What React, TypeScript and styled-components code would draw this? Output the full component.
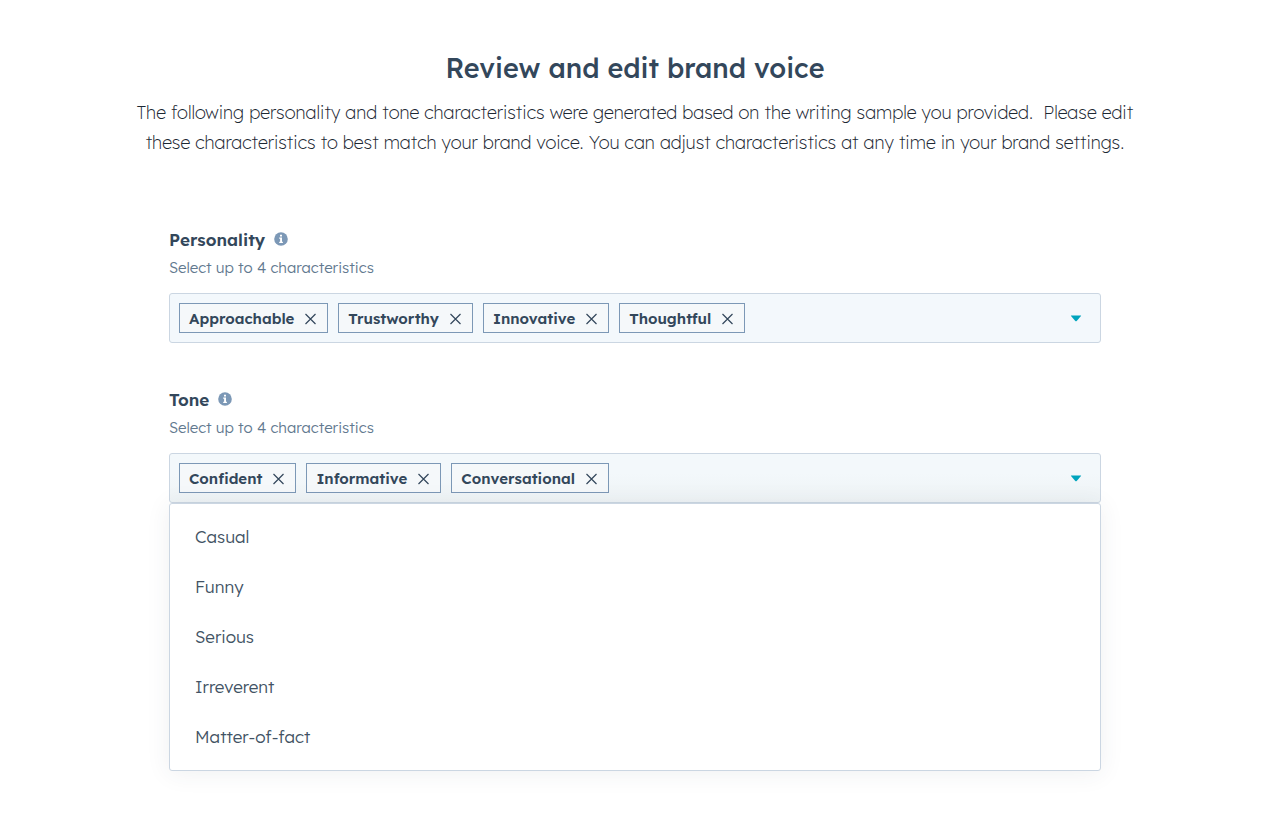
import React, { useState } from "react";
import styled, { createGlobalStyle } from "styled-components";

const GlobalStyle = createGlobalStyle`
  *, *::before, *::after { box-sizing: border-box; }
  body {
    margin: 0;
    background: #fff;
    color: #33475b;
    font-family: "Lexend Deca", Inter, "Liberation Sans", sans-serif;
  }
`;

const Page = styled.main`
  display: flex;
  flex-direction: column;
  align-items: center;
  padding: 48px 34px 42px 24px;
`;

const Header = styled.header`
  max-width: 1020px;
  text-align: center;
`;

const Title = styled.h1`
  margin: 0;
  font-size: 27px;
  line-height: 40px;
  font-weight: 500;
  color: #33475b;
`;

const Intro = styled.p`
  margin: 10px 0 0;
  font-size: 18px;
  line-height: 30px;
  font-weight: 200;
  color: #1c2833;
`;

const Line = styled.span`
  display: block;
  white-space: pre-wrap;
`;

const Form = styled.form`
  display: flex;
  flex-direction: column;
  gap: 43px;
  width: 100%;
  max-width: 932px;
  margin-top: 68px;
`;

const Field = styled.section`
  display: flex;
  flex-direction: column;
`;

const LabelRow = styled.div`
  display: flex;
  align-items: center;
  gap: 9px;
`;

const Label = styled.label`
  font-size: 17px;
  line-height: 28px;
  font-weight: 600;
  color: #33475b;
`;

const InfoButton = styled.button`
  display: flex;
  margin: 0 0 3px;
  padding: 0;
  border: 0;
  background: none;
  cursor: pointer;
`;

const Hint = styled.p`
  margin: 0 0 11px;
  font-size: 15px;
  line-height: 28px;
  font-weight: 300;
  color: #62798f;
`;

const Combo = styled.div<{ $open?: boolean }>`
  display: flex;
  align-items: center;
  justify-content: space-between;
  min-height: 50px;
  padding: 9px;
  border: 1px solid #cbd6e2;
  border-radius: 3px;
  background: ${(p) =>
    p.$open ? "linear-gradient(#f3f8fb 40%, #eef3f5)" : "#f3f8fc"};
`;

const Chips = styled.ul`
  display: flex;
  flex-wrap: wrap;
  gap: 10px;
  margin: 0;
  padding: 0;
  list-style: none;
`;

const Chip = styled.li`
  display: flex;
  align-items: center;
  gap: 10px;
  height: 30px;
  padding: 2px 10px 0 9px;
  border: 1px solid #7c98b6;
  background: #f5f8fa;
  font-size: 15px;
  line-height: 26px;
  font-weight: 600;
  color: #33475b;
`;

const RemoveButton = styled.button`
  display: flex;
  padding: 0;
  border: 0;
  background: none;
  cursor: pointer;
`;

const Toggle = styled.button`
  display: flex;
  padding: 8px 9px;
  border: 0;
  background: none;
  cursor: pointer;
`;

const Menu = styled.div`
  display: flex;
  flex-direction: column;
  padding: 8px 0;
  border: 1px solid #cbd6e2;
  border-radius: 3px;
  background: #fff;
  box-shadow: 0 2px 24px rgba(45, 62, 80, 0.08);
`;

const Option = styled.button`
  height: 50px;
  padding: 0 25px;
  border: 0;
  background: none;
  font-family: inherit;
  font-size: 17px;
  line-height: 28px;
  font-weight: 300;
  text-align: left;
  color: #425364;
  cursor: pointer;
`;

const InfoIcon = () => (
  <svg width="14" height="14" viewBox="0 0 14 14" aria-hidden="true">
    <circle cx="7" cy="7" r="6.8" fill="#7c98b6" />
    <path d="M6 2.8h2v1.7H6zM5.2 5.6H8v4.2h.9V11H5.2V9.8h.9V6.8h-.9z" fill="#fff" />
  </svg>
);

const CloseIcon = () => (
  <svg width="13" height="12" viewBox="0 0 13 12" aria-hidden="true">
    <path d="M1.5 1l10 10M11.5 1l-10 10" fill="none" stroke="#33475b" strokeWidth="1.2" />
  </svg>
);

const CaretIcon = () => (
  <svg width="12" height="7" viewBox="0 0 12 7" aria-hidden="true">
    <path d="M1.2.5h9.6q.6 0 .2.5L6.7 5.9q-.7.7-1.4 0L1 1Q.6.5 1.2.5z" fill="#00a4bd" />
  </svg>
);

interface PickerProps {
  id: string;
  label: string;
  initial: string[];
  options?: string[];
}

function Picker({ id, label, initial, options }: PickerProps) {
  const [selected, setSelected] = useState(initial);
  const [open, setOpen] = useState(Boolean(options));
  const isOpen = open && Boolean(options);

  return (
    <Field>
      <LabelRow>
        <Label htmlFor={id}>{label}</Label>
        <InfoButton type="button" aria-label={`About ${label}`}>
          <InfoIcon />
        </InfoButton>
      </LabelRow>
      <Hint>Select up to 4 characteristics</Hint>
      <Combo $open={isOpen}>
        <Chips>
          {selected.map((name) => (
            <Chip key={name}>
              {name}
              <RemoveButton
                type="button"
                aria-label={`Remove ${name}`}
                onClick={() => setSelected(selected.filter((s) => s !== name))}
              >
                <CloseIcon />
              </RemoveButton>
            </Chip>
          ))}
        </Chips>
        <Toggle
          id={id}
          type="button"
          aria-haspopup="listbox"
          aria-expanded={isOpen}
          onClick={() => setOpen(!open)}
        >
          <CaretIcon />
        </Toggle>
      </Combo>
      {isOpen && (
        <Menu role="listbox" aria-label={label}>
          {options
            ?.filter((o) => !selected.includes(o))
            .map((o) => (
              <Option
                key={o}
                type="button"
                role="option"
                aria-selected={false}
                onClick={() => selected.length < 4 && setSelected([...selected, o])}
              >
                {o}
              </Option>
            ))}
        </Menu>
      )}
    </Field>
  );
}

export default function App() {
  return (
    <>
      <GlobalStyle />
      <Page>
        <Header>
          <Title>Review and edit brand voice</Title>
          <Intro>
            <Line>
              {"The following personality and tone characteristics were generated based on the writing sample you provided.  Please edit"}
            </Line>
            <Line>
              these characteristics to best match your brand voice. You can adjust characteristics at any time in your brand settings.
            </Line>
          </Intro>
        </Header>
        <Form>
          <Picker
            id="personality"
            label="Personality"
            initial={["Approachable", "Trustworthy", "Innovative", "Thoughtful"]}
          />
          <Picker
            id="tone"
            label="Tone"
            initial={["Confident", "Informative", "Conversational"]}
            options={["Casual", "Funny", "Serious", "Irreverent", "Matter-of-fact"]}
          />
        </Form>
      </Page>
    </>
  );
}
